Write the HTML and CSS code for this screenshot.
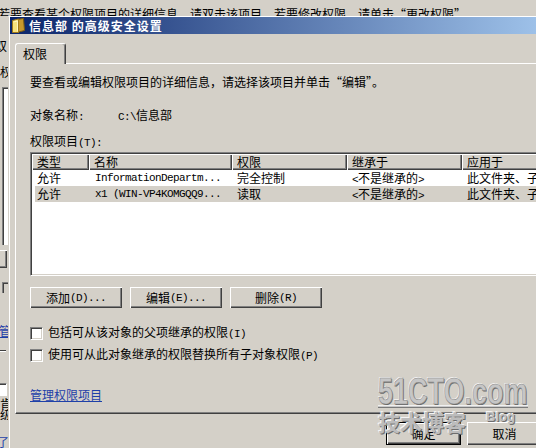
FILE: index.html
```html
<!DOCTYPE html>
<html lang="zh-CN">
<head>
<meta charset="utf-8">
<title>信息部 的高级安全设置</title>
<link rel="stylesheet" href="styles.css">
</head>
<body>
<div class="bgwin">
  <div class="bg-top">若要查看某个权限项目的详细信息，请双击该项目。若要修改权限，请单击“更改权限”。</div>
  <div class="bg-side">
    <div class="s-t1">双</div>
    <div class="s-t2">权</div>
    <div class="s-list"></div>
    <div class="s-btn"></div>
    <div class="s-small"></div>
    <div class="s-link">管</div>
    <div class="s-line"></div>
    <div class="s-box"></div>
    <div class="s-chars">肯<br>级</div>
    <div class="s-link2">了</div>
  </div>
</div>

<div class="dialog">
  <div class="titlebar">
    <svg class="ficon" width="14" height="15" viewBox="0 0 14 15">
      <path d="M6 1.5 L12.5 0.5 L13.5 12.5 L6 14.5 Z" fill="#c8982c" stroke="#7a5a10" stroke-width="1"/>
      <path d="M1.5 2.5 L7.5 1 L7.5 14.5 L1.5 14.5 Z" fill="#f6e27c" stroke="#a07a1c" stroke-width="1"/>
      <path d="M2.5 4 L6.5 3 L6.5 13.5" fill="none" stroke="#fff6c0" stroke-width="1"/>
    </svg>
    <span class="ttext">信息部 的高级安全设置</span>
  </div>
  <div class="dbody">
    <div class="tab">权限</div>
    <div class="panel">
      <p class="intro">要查看或编辑权限项目的详细信息，请选择该项目并单击“编辑”。</p>
      <div class="objrow"><span class="objlbl">对象名称<span class="m">:</span></span><span><span class="m">C:\</span>信息部</span></div>
      <div class="lbl2">权限项目<span class="m">(T):</span></div>
      <div class="list">
        <div class="lrow head">
          <div class="hc">类型</div>
          <div class="hc">名称</div>
          <div class="hc">权限</div>
          <div class="hc">继承于</div>
          <div class="hc">应用于</div>
        </div>
        <div class="lrow">
          <div class="c">允许</div>
          <div class="c m">InformationDepartm...</div>
          <div class="c">完全控制</div>
          <div class="c"><span class="m">&lt;</span>不是继承的<span class="m">&gt;</span></div>
          <div class="c">此文件夹、子文件夹</div>
        </div>
        <div class="lrow sel">
          <div class="c">允许</div>
          <div class="c m">x1 (WIN-VP4KOMGQQ9...</div>
          <div class="c">读取</div>
          <div class="c"><span class="m">&lt;</span>不是继承的<span class="m">&gt;</span></div>
          <div class="c">此文件夹、子文件夹</div>
        </div>
      </div>
      <div class="btnrow">
        <button class="btn">添加<span class="m">(D)...</span></button>
        <button class="btn">编辑<span class="m">(E)...</span></button>
        <button class="btn">删除<span class="m">(R)</span></button>
      </div>
      <label class="chk chk1"><span class="box"></span><span>包括可从该对象的父项继承的权限<span class="m">(I)</span></span></label>
      <label class="chk chk2"><span class="box"></span><span>使用可从此对象继承的权限替换所有子对象权限<span class="m">(P)</span></span></label>
      <a class="link" href="#">管理权限项目</a>
    </div>
    <div class="footer">
      <button class="btn2 default">确定</button>
      <button class="btn2">取消</button>
    </div>
  </div>
</div>

<div class="wm">
  <div class="wm-top">51CTO.com</div>
  <div class="wm-line"></div>
  <div class="wm-bot"><span class="wm-cn">技术博客</span><span class="wm-blog">Blog</span></div>
</div>
</body>
</html>
```

FILE: styles.css
```css
* { box-sizing: border-box; }
html, body { margin: 0; padding: 0; }
body {
  width: 536px;
  height: 448px;
  overflow: hidden;
  position: relative;
  background: #d4d0c8;
  color: #000;
  font: 12px/16px "Noto Sans CJK SC", sans-serif;
}
.m {
  font-family: "Liberation Mono", monospace;
  font-size: 11px;
  letter-spacing: -0.6px;
}

/* background window */
.bgwin {
  position: absolute;
  left: 0; top: 0;
  width: 536px; height: 448px;
  display: flex;
  flex-direction: column;
}
.bg-top {
  height: 16px;
  overflow: hidden;
  white-space: nowrap;
  padding-top: 6px;
  margin-left: -2px;
  line-height: 16px;
}
.bg-side {
  width: 8px;
  height: 432px;
  overflow: hidden;
  display: flex;
  flex-direction: column;
  white-space: nowrap;
}
.s-t1 { margin-top: 24px; line-height: 12px; height: 12px; margin-left: -5px; }
.s-t2 { margin-top: 14px; line-height: 12px; height: 12px; }
.s-list {
  margin-top: 9px; height: 158px; margin-left: 2px; width: 20px;
  background: #fff;
  border-left: 1px solid #808080; border-top: 1px solid #808080;
  box-shadow: inset 1px 1px #404040;
  flex: none;
}
.s-btn {
  margin-top: 5px; height: 18px; margin-left: -60px; width: 67px; flex: none;
  box-shadow: inset 1px 1px #fff, inset -1px -1px #404040, inset -2px -2px #808080;
}
.s-small {
  margin-top: 14px; height: 11px; margin-left: 2px; width: 12px; flex: none;
  border-left: 1px solid #808080; border-top: 1px solid #808080;
  box-shadow: inset 1px 1px #404040;
}
.s-link { margin-top: 31px; height: 14px; line-height: 14px; color: #1e40a8; text-decoration: underline; margin-left: -1px; }
.s-line { margin-top: 12px; height: 2px; width: 6px; flex: none; border-top: 1px solid #404040; border-bottom: 1px solid #fff; }
.s-box {
  margin-top: 31px; height: 13px; width: 13px; margin-left: -6px; flex: none;
  background: #fff;
  border: 1px solid; border-color: #808080 #fff #fff #808080;
  box-shadow: inset 1px 1px #404040;
}
.s-chars { margin-top: 2px; line-height: 11px; height: 22px; overflow: hidden; }
.s-link2 { margin-top: 16px; line-height: 12px; color: #1e40a8; margin-left: -3px; }

/* dialog window */
.dialog {
  position: absolute;
  left: 8px;
  top: 16px;
  width: 560px;
  height: 440px;
  background: #d4d0c8;
  border-top: 1px solid #fff;
  border-left: 1px solid #d4d0c8;
  padding-left: 1px;
  box-shadow: inset 1px 0 #fff;
}
.titlebar {
  height: 17px;
  display: flex;
  align-items: center;
  gap: 4px;
  padding-left: 1px;
  background: linear-gradient(to right, #0a246a, #a6caf0);
  color: #fff;
}
.ficon { flex: none; display: block; }
.ttext {
  font-weight: bold;
  letter-spacing: 1px;
  line-height: 17px;
  white-space: nowrap;
}
.dbody {
  padding: 9px 0 0 5px;
}
.tab {
  position: relative;
  z-index: 1;
  width: 51px;
  height: 21px;
  margin-bottom: -1px;
  background: #d4d0c8;
  border-top: 1px solid #fff;
  border-left: 1px solid #fff;
  border-right: 1px solid #404040;
  border-radius: 3px 3px 0 0;
  box-shadow: inset -1px 0 #808080;
  padding-left: 7px;
  line-height: 19px;
}
.panel {
  height: 351px;
  border-top: 1px solid #fff;
  border-left: 1px solid #fff;
  border-bottom: 1px solid #404040;
  box-shadow: inset 0 -1px #808080;
  padding: 10px 0 0 14px;
  display: flex;
  flex-direction: column;
  align-items: flex-start;
}
.intro { margin: 0; height: 16px; white-space: nowrap; }
.objrow { margin-top: 17px; height: 16px; display: flex; white-space: nowrap; }
.objlbl { width: 88px; }
.lbl2 { margin-top: 10px; height: 16px; }
.list {
  margin-top: 3px;
  height: 124px;
  width: 530px;
  flex: none;
  background: #fff;
  border: 1px solid;
  border-color: #808080 #fff #fff #808080;
  box-shadow: inset 1px 1px #404040, inset -1px -1px #d4d0c8;
  padding: 1px;
  overflow: hidden;
}
.lrow {
  display: grid;
  grid-template-columns: 57px 143px 115px 115px 160px;
  height: 16px;
  white-space: nowrap;
}
.head { background: #d4d0c8; }
.hc {
  height: 16px;
  line-height: 15px;
  padding-left: 5px;
  box-shadow: inset 1px 1px #fff, inset -1px -1px #404040, inset -2px -2px #808080;
  overflow: hidden;
}
.c {
  line-height: 16px;
  padding-left: 5px;
  overflow: hidden;
}
.c.m { padding-left: 6px; }
.sel { background: linear-gradient(to right, transparent 3px, #d4d0c8 3px); }

.btnrow {
  margin-top: 11px;
  display: flex;
  gap: 8px;
}
.btn, .btn2 {
  font: inherit;
  color: #000;
  background: #d4d0c8;
  border: none;
  padding: 0;
  margin: 0;
  box-shadow: inset 1px 1px #fff, inset -1px -1px #404040, inset -2px -2px #808080;
  display: flex;
  align-items: center;
  justify-content: center;
  white-space: nowrap;
}
.btn { width: 92px; height: 21px; }
.chk {
  display: flex;
  align-items: center;
  gap: 5px;
  height: 16px;
  white-space: nowrap;
}
.chk1 { margin-top: 17px; }
.chk2 { margin-top: 6px; }
.box {
  width: 13px;
  height: 13px;
  flex: none;
  background: #fff;
  border: 1px solid;
  border-color: #808080 #fff #fff #808080;
  box-shadow: inset 1px 1px #404040, inset -1px -1px #d4d0c8;
}
.link {
  margin-top: 24px;
  height: 16px;
  color: #1e40a8;
  text-decoration: underline;
}
.footer {
  margin-top: 8px;
  padding-left: 371px;
  display: flex;
  gap: 6px;
}
.btn2 { width: 75px; height: 23px; }
.btn2.default {
  border: 1px solid #000;
  box-shadow: inset 1px 1px #fff, inset -1px -1px #404040, inset -2px -2px #808080;
}

/* watermark overlay */
.wm {
  position: absolute;
  left: 378px;
  top: 378px;
  width: 152px;
  pointer-events: none;
}
.wm-top {
  font: bold 36px/28px "Liberation Sans", sans-serif;
  transform: scaleX(0.75);
  transform-origin: left top;
  white-space: nowrap;
  color: #c6c6c6;
  -webkit-text-stroke: 0.6px #8a8a8a;
  text-shadow: 1px 1px 0 #6a6a6a, -1px -1px 0 #f4f4f4;
  height: 27px;
}
.wm-line {
  width: 150px;
  height: 3px;
  background: #c8c8c8;
  border-top: 1px solid #f0f0f0;
  border-bottom: 1px solid #7a7a7a;
}
.wm-bot {
  display: flex;
  align-items: flex-start;
  white-space: nowrap;
}
.wm-cn {
  font: bold 22px/26px "Noto Sans CJK SC", sans-serif;
  color: #bcbcbc;
  text-shadow: 1px 1px 0 #6e6e6e, -1px -1px 0 #f4f4f4;
}
.wm-blog {
  margin-left: 20px;
  margin-top: 2px;
  font: bold 13px/14px "Liberation Sans", sans-serif;
  color: #c0c0c0;
  text-shadow: 1px 1px 0 #6e6e6e, -1px -1px 0 #f4f4f4;
}
```
